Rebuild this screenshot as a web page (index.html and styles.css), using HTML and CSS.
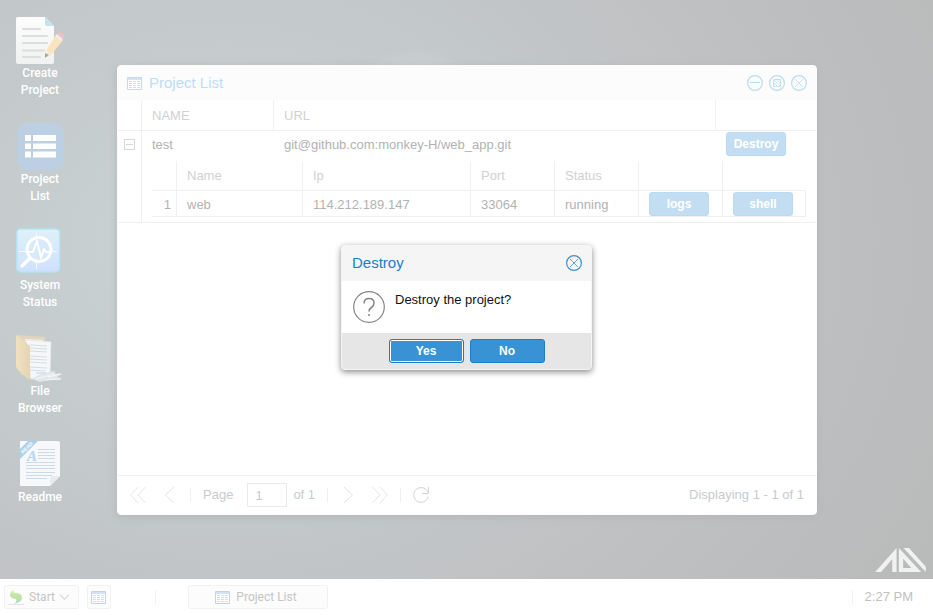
FILE: index.html
```html
<!DOCTYPE html>
<html lang="en">
<head>
<meta charset="utf-8">
<meta name="viewport" content="width=device-width, initial-scale=1">
<title>Desktop</title>
<link rel="stylesheet" href="styles.css">
</head>
<body>
<svg class="defs" aria-hidden="true">
  <defs>
    <linearGradient id="paper" x1="0" y1="0" x2="0" y2="1"><stop offset="0" stop-color="#fdfdfd"/><stop offset="1" stop-color="#f0f1f1"/></linearGradient>
    <linearGradient id="sky" x1="0" y1="0" x2="0" y2="1"><stop offset="0" stop-color="#e0f1f8"/><stop offset="1" stop-color="#cfe0ff"/></linearGradient>
    <linearGradient id="folder" x1="0" y1="0" x2="1" y2="0"><stop offset="0" stop-color="#f0e2c0"/><stop offset="1" stop-color="#e5d4b4"/></linearGradient>
    <linearGradient id="leaf" x1="0" y1="0" x2="0" y2="1"><stop offset="0" stop-color="#e4eeb4"/><stop offset="0.5" stop-color="#bfe3a4"/><stop offset="1" stop-color="#b2dccb"/></linearGradient>
    <symbol id="grid" viewBox="0 0 15 13">
      <path fill="#fff" stroke="currentColor" d="M.5.5h14v12H.5z"/>
      <path fill="#d3e2f5" d="M1 1h13v2H1z"/>
      <path stroke="#dcdcdc" stroke-dasharray="3 1" d="M2 4.500h11M2 6.500h11M2 8.500h11M2 10.500h11"/>
    </symbol>
    <symbol id="close" viewBox="0 0 16 16">
      <g fill="none" stroke="currentColor"><circle cx="8" cy="8" r="7.400" stroke-width="1.200"/><path stroke-width=".8" d="M4 4l8 8M12 4l-8 8"/></g>
    </symbol>
  </defs>
</svg>

<main class="desktop">
  <nav class="shortcuts" aria-label="Desktop shortcuts">
    <a class="shortcut" href="#create">
      <svg class="shortcut-icon" viewBox="0 0 48 48" aria-hidden="true">
        <path fill="url(#paper)" d="M2 1h27l9 9v36q0 2-2 2H2q-2 0-2-2V3q0-2 2-2z"/>
        <path fill="#c6e2ee" d="M29 1l9 9h-7q-2 0-2-2z"/>
        <path stroke="#dcdddd" stroke-width="2" stroke-linecap="round" d="M7 13h17M7 20h24M7 27h24M7 34.500h21M7 41h17"/>
        <path fill="#fbe3bd" d="M40 19l7 5-12 15-5-4z"/>
        <path fill="#f6edda" d="M30 34l6 5-6 2z"/>
        <path fill="#eee" d="M39 20l2-2 6 5-2 2z"/>
        <path fill="#f3bfc2" d="M41 18q2-3 5-1 4 2 1 6z"/>
        <path fill="#a9a9a9" d="M29 37l4 2-4 3z"/>
      </svg>
      <span>Create<br>Project</span>
    </a>
    <a class="shortcut" href="#projects">
      <svg class="shortcut-icon" viewBox="0 0 48 48" aria-hidden="true">
        <rect x="1" y="1" width="47" height="47" rx="11" fill="#bccfe3"/>
        <path fill="#fff" d="M9 13h6v6H9zM17 13h23v6H17zM9 21.500h6v5.500H9zM17 21.500h23v5.500H17zM9 29.500h6v6H9zM17 29.500h23v6H17z"/>
      </svg>
      <span>Project<br>List</span>
    </a>
    <a class="shortcut" href="#status">
      <svg class="shortcut-icon" viewBox="0 0 48 48" aria-hidden="true">
        <rect x=".7" y="1" width="43" height="43" rx="4" fill="url(#sky)" stroke="#b4e3f2" stroke-width="1.500"/>
        <path stroke="#fff" stroke-opacity=".8" d="M3 23.500h38M20.500 5v36"/>
        <circle cx="23" cy="21.500" r="12" fill="#d8e9fb" stroke="#fff" stroke-width="3"/>
        <path fill="none" stroke="#fff" stroke-width="3.500" stroke-linecap="round" d="M14 30l-8 8"/>
        <path fill="none" stroke="#fff" stroke-width="2" stroke-linejoin="round" d="M13 24h4l4-11 4 17 3-9 2 3h4"/>
      </svg>
      <span>System<br>Status</span>
    </a>
    <a class="shortcut" href="#files">
      <svg class="shortcut-icon" viewBox="0 0 48 48" aria-hidden="true">
        <path fill="#e2d5bd" d="M1 1l28 2v38H5z"/>
        <path fill="#eff1f2" d="M9 5l18 1-2 37-13 1z"/>
        <path fill="#f5f7f9" stroke="#e2e6e9" stroke-width=".7" d="M10 6l25 2-1 35-19 2z"/>
        <path stroke="#d8dcdf" stroke-width="1.200" d="M14 11l17 1M14 14l17 1M14 17l17 1M14 22l17 1M14 25l17 1M14 28l17 1M14 33l17 1M14 36l16 1"/>
        <path fill="#e3e7e9" d="M24 40l14-3 2 3 6-1-5 4 5 2-14 1-8 2-8-3z"/>
        <path fill="none" stroke="#f8f8f8" d="M20 45l18-5M32 43l13-3M30 46l15-1"/>
        <path stroke="#b9d5ee" d="M20 39l10 0"/>
        <path fill="url(#folder)" d="M1 1l13 11v35L2 36Q0 34 0 31V3q0-1 1-2z"/>
      </svg>
      <span>File<br>Browser</span>
    </a>
    <a class="shortcut" href="#readme">
      <svg class="shortcut-icon" viewBox="0 0 48 48" aria-hidden="true">
        <path fill="#b6bbbd" d="M5 45h30v1H5z"/>
        <path fill="#f7f8f9" d="M5 1h37q2 0 2 2v33L34 46H5q-1 0-1-1V2q0-1 1-1z"/>
        <path fill="#e9ebed" d="M44 36l-10 10v-7q0-3 3-3z"/>
        <path stroke="#cbd9e9" d="M22 9.500h17M22 12.500h17M22 15.500h17M22 18.500h17M10 22.500h29M10 25.500h29M10 28.500h29M10 32.500h29M10 35.500h26M10 38.500h21"/>
        <text class="readme-letter" x="11" y="21">A</text>
        <path fill="#abd1ee" d="M4 9l8-8h10L4 19z"/>
        <text class="readme-ribbon" transform="translate(7 14) rotate(-45)">READ</text>
      </svg>
      <span>Readme</span>
    </a>
  </nav>

  <section class="window" aria-labelledby="window-title">
    <header class="window-header">
      <svg class="grid-icon pale" aria-hidden="true"><use href="#grid"/></svg>
      <h1 id="window-title" class="title">Project List</h1>
      <div class="tools">
        <button class="tool" aria-label="Minimize"><svg viewBox="0 0 16 16"><g fill="none" stroke="currentColor"><circle cx="8" cy="8" r="7.400" stroke-width="1.200"/><path d="M3 7.500h10"/></g></svg></button>
        <button class="tool" aria-label="Restore"><svg viewBox="0 0 16 16"><g fill="none" stroke="currentColor"><circle cx="8" cy="8" r="7.400" stroke-width="1.200"/><path stroke-width=".8" d="M6.500 4.500h5v5M11.500 4.500v7h-7v-7zM5 5l6 6M8 5l3 3M5 8l3 3"/></g></svg></button>
        <button class="tool" aria-label="Close"><svg viewBox="0 0 16 16"><use href="#close"/></svg></button>
      </div>
    </header>

    <div class="window-body">
      <table class="projects">
        <colgroup><col class="c-expand"><col class="c-name"><col><col class="c-action"></colgroup>
        <thead>
          <tr><th></th><th scope="col">NAME</th><th scope="col">URL</th><th></th></tr>
        </thead>
        <tbody>
          <tr class="project">
            <td class="expand" rowspan="2"><button class="collapse" aria-label="Collapse row"></button></td>
            <td>test</td>
            <td>git@github.com:monkey-H/web_app.git</td>
            <td class="action"><button class="btn faded">Destroy</button></td>
          </tr>
          <tr>
            <td class="detail" colspan="3">
              <table class="containers">
                <colgroup><col class="k-num"><col class="k-name"><col><col class="k-cell"><col class="k-cell"><col class="k-cell"><col class="k-cell"></colgroup>
                <thead><tr><th></th><th scope="col">Name</th><th scope="col">Ip</th><th scope="col">Port</th><th scope="col">Status</th><th></th><th></th></tr></thead>
                <tbody>
                  <tr><td class="num">1</td><td>web</td><td>114.212.189.147</td><td>33064</td><td>running</td><td class="action"><button class="btn faded">logs</button></td><td class="action"><button class="btn faded">shell</button></td></tr>
                </tbody>
              </table>
            </td>
          </tr>
        </tbody>
      </table>
    </div>

    <footer class="pager">
      <button class="page-btn" aria-label="First page"><svg viewBox="0 0 16 16"><path d="M8 0L.7 8 8 16M15.500 0L8.200 8l7.300 8"/></svg></button>
      <button class="page-btn" aria-label="Previous page"><svg viewBox="0 0 16 16"><path d="M12 0L3.500 8l8.500 8"/></svg></button>
      <span class="sep"></span>
      <label for="page">Page</label>
      <input id="page" class="page-input" value="1">
      <span class="page-total">of 1</span>
      <span class="sep"></span>
      <button class="page-btn" aria-label="Next page"><svg viewBox="0 0 16 16"><path d="M4 0l8.500 8L4 16"/></svg></button>
      <button class="page-btn" aria-label="Last page"><svg viewBox="0 0 16 16"><path d="M.5 0l7.300 8L.5 16M8 0l7.300 8L8 16"/></svg></button>
      <span class="sep"></span>
      <button class="page-btn refresh" aria-label="Refresh"><svg viewBox="0 0 16 16"><path d="M15.500 0v6.500H9M15.500 6Q13 .6 8 .6a7.400 7.400 0 1 0 7.300 9"/></svg></button>
      <span class="summary">Displaying 1 - 1 of 1</span>
    </footer>
  </section>

  <svg class="logo" viewBox="705 248 154 73" role="img" aria-label="Logo">
    <path fill="#f1f1f1" fill-rule="evenodd" d="M705 321l65-73v73h-13v-39l-34 39zM777 248l68 73h-68zM790 281v28h25zM791 248h17l51 57v16z"/>
  </svg>
</main>

<footer class="taskbar">
  <button class="task start">
    <svg class="start-icon" viewBox="0 0 16 16" aria-hidden="true"><path fill="url(#leaf)" d="M6 0Q1 4 2 7q2 3 6 3 1 3-2 5 9-2 8-7-1-4-6-4Q4 4 6 0z"/><path stroke="#e3e3e3" d="M0 15.500h16"/></svg>
    <span>Start</span>
    <svg class="chevron" viewBox="0 0 8 5" aria-hidden="true"><path d="M0 .5l4 4 4-4"/></svg>
  </button>
  <button class="task quick" aria-label="Project List shortcut"><svg class="grid-icon"><use href="#grid"/></svg></button>
  <span class="sep"></span>
  <button class="task running"><svg class="grid-icon" aria-hidden="true"><use href="#grid"/></svg><span>Project List</span></button>
  <span class="sep tray-sep"></span>
  <time class="clock">2:27 PM</time>
</footer>

<div class="overlay">
  <section class="dialog" role="alertdialog" aria-labelledby="dialog-title" aria-describedby="dialog-text">
    <header class="dialog-header">
      <h2 id="dialog-title" class="title">Destroy</h2>
      <button class="tool" aria-label="Close dialog"><svg viewBox="0 0 16 16"><use href="#close"/></svg></button>
    </header>
    <div class="dialog-body">
      <svg class="question" viewBox="0 0 32 32" aria-hidden="true"><g fill="none" stroke="#858585"><circle cx="16" cy="16" r="15.300" stroke-width="1.200"/><path stroke-width="1.500" d="M11 12.500q0-5 5-5t5 4.500q0 3-2.500 4.500T16 20.500M16 23v2"/></g></svg>
      <p id="dialog-text" class="dialog-text">Destroy the project?</p>
    </div>
    <footer class="dialog-footer">
      <button class="btn wide focused">Yes</button>
      <button class="btn wide">No</button>
    </footer>
  </section>
</div>
</body>
</html>
```
FILE: styles.css
```css
* { box-sizing: border-box; }

body {
  margin: 0;
  min-height: 100vh;
  display: flex;
  flex-direction: column;
  font: 13px/17px "Liberation Sans", Arial, sans-serif;
  color: #b2b2b2;
}

button, input { font: inherit; color: inherit; margin: 0; }
button { padding: 0; border: 0; background: none; cursor: pointer; }
svg { display: block; }
.defs { position: absolute; width: 0; height: 0; }

/* Desktop */
.desktop {
  position: relative;
  flex: 1;
  overflow: hidden;
  background:
    radial-gradient(ellipse 64px 50px at 416px 98px, #d3d8da 0, rgba(205, 210, 212, 0.5) 80%, transparent 100%),
    radial-gradient(ellipse 800px 640px at 24% 42%, #cbd4d6 0, #c4cacc 35%, #c0c1c3 65%, #b9baba 100%);
}

.shortcuts {
  display: flex;
  flex-direction: column;
  gap: 23px;
  width: 80px;
  padding-top: 16px;
}

.shortcut {
  display: flex;
  flex-direction: column;
  align-items: center;
  gap: 1px;
  font: 500 12px/17px Roboto, sans-serif;
  color: #fff;
  text-align: center;
  text-decoration: none;
}

.shortcut-icon { width: 48px; height: 48px; }
.readme-letter { font: italic bold 15px "Liberation Serif", serif; fill: #b3d6f0; }
.readme-ribbon { font: bold 5px "Liberation Sans", sans-serif; fill: #fff; }

.logo {
  position: absolute;
  right: 7px;
  bottom: 7px;
  width: 51px;
  height: 24px;
}

/* Project window */
.window {
  position: absolute;
  inset: 65px 116px 64px 117px;
  display: flex;
  flex-direction: column;
  border: 1px solid #fcfcfc;
  border-radius: 4px;
  background: #fff;
  box-shadow: 0 2px 8px #b2b6b6;
  overflow: hidden;
}

.window-header {
  display: flex;
  align-items: center;
  gap: 7px;
  height: 34px;
  padding: 0 9px;
  background: #fcfcfc;
  color: #bbdef5;
}

.title { flex: 1; margin: 0; font-size: 15px; line-height: 20px; font-weight: normal; }
.grid-icon { width: 15px; height: 13px; color: #c6d2ea; }
.pale { color: #cad8ee; }
.tools { display: flex; gap: 6px; }
.tool { width: 16px; height: 16px; color: #bbdcef; }
.tool svg { width: 16px; height: 16px; }

.window-body { flex: 1; }

table { width: 100%; table-layout: fixed; border-collapse: separate; border-spacing: 0; }
th, td { padding: 0 10px; text-align: left; font-weight: normal; white-space: nowrap; }
th { height: 31px; border-bottom: 1px solid #f0f0f0; color: #d1d1d1; }
th + th { border-left: 1px solid #f0f0f0; }

.c-expand { width: 23px; }
.c-name { width: 132px; }
.c-action { width: 101px; }

.project td { height: 28px; padding-bottom: 2px; }
.projects td.expand {
  padding: 8px 0 0 6px;
  border-bottom: 1px solid #f0f0f0;
  vertical-align: top;
}
.projects .project .expand + td { border-left: 1px solid #f0f0f0; }
.projects .project .expand + td ~ td { padding-left: 11px; }
.collapse {
  display: block;
  width: 11px;
  height: 11px;
  border: 1px solid #d8d8d8;
  background: linear-gradient(#d8d8d8, #d8d8d8) center / 7px 1px no-repeat;
}
td.detail { padding: 2px 10px 5px; border-left: 1px solid #f0f0f0; border-bottom: 1px solid #f0f0f0; }

.k-num { width: 24px; }
.k-name { width: 126px; }
.k-cell { width: 84px; }
.containers th { height: 30px; }
.containers td { height: 26px; padding-top: 1px; border-left: 1px solid #f0f0f0; border-bottom: 1px solid #f0f0f0; }
.containers td:first-child { border-left: 0; }
.containers td:last-child { border-right: 1px solid #f0f0f0; }
.containers .num { padding-right: 5px; padding-left: 5px; text-align: right; }

.btn {
  display: block;
  width: 60px;
  height: 24px;
  border: 1px solid #1a7fca;
  border-radius: 3px;
  background: #3892d4;
  color: #fff;
  font-size: 12px;
  line-height: 20px;
  font-weight: bold;
}
.faded { border-color: #b8dbf3; background: #c3def2; }
.wide { width: 75px; }
.focused { box-shadow: inset 0 0 0 1px #fff; }

/* Paging bar */
.pager {
  display: flex;
  align-items: center;
  height: 39px;
  padding: 0 12px;
  border-top: 1px solid #f0f0f0;
  color: #c7cbce;
}
.pager label, .page-total, .summary { padding-bottom: 2px; }
.page-btn { width: 16px; height: 16px; margin-right: 16px; }
.page-btn svg { width: 16px; height: 16px; }
.page-btn path { fill: none; stroke: #e2e4e5; }
.page-btn.refresh path { stroke: #d2d4d5; }
.sep { width: 1px; height: 14px; background: #f0f0f0; }
.pager .sep { margin-right: 12px; }
.page-btn + .sep { margin-left: -4px; }
.page-input {
  width: 40px;
  height: 24px;
  margin: 0 6px 0 14px;
  padding: 0 7px;
  border: 1px solid #eaeaea;
  background: #fff;
}
.page-total { margin-right: 12px; }
.summary { margin-left: auto; }

/* Taskbar */
.taskbar {
  display: flex;
  align-items: center;
  height: 36px;
  padding: 0 20px 0 4px;
  background: #fff;
  color: #c4c4c4;
}
.task {
  display: flex;
  align-items: center;
  justify-content: center;
  gap: 6px;
  height: 24px;
  border: 1px solid #f1f1f1;
  border-radius: 3px;
  background: #fcfcfc;
  font: 12px/16px Roboto, sans-serif;
}
.start { width: 75px; gap: 5px; padding-right: 6px; }
.start-icon { width: 16px; height: 16px; }
.chevron { width: 9px; height: 6px; }
.chevron path { fill: none; stroke: #d8d8d8; }
.quick { width: 24px; margin: 0 44px 0 8px; padding-right: 2px; }
.running { width: 140px; margin-left: 32px; padding-right: 4px; }
.tray-sep { margin: 0 12px 0 auto; }
.clock { color: #c1c1c1; padding-bottom: 2px; }

/* Confirmation dialog */
.overlay {
  position: absolute;
  inset: 0;
  display: grid;
  place-items: center;
}
.dialog {
  width: 251px;
  border: 1px solid #f5f5f5;
  border-radius: 4px;
  background: #fff;
  box-shadow: 0 2px 6px #888;
  overflow: hidden;
}
.dialog-header {
  display: flex;
  align-items: center;
  height: 35px;
  padding: 0 9px 2px 10px;
  background: #f5f5f5;
  color: #1a7fca;
}
.dialog-header .tool { color: #3892d4; }
.dialog-body { display: flex; gap: 10px; padding: 10px 10px 10px 11px; }
.question { width: 32px; height: 32px; }
.dialog-text { margin: 0; color: #111; }
.dialog-footer {
  display: flex;
  justify-content: center;
  gap: 6px;
  padding: 6px;
  background: #e6e6e6;
}
```
